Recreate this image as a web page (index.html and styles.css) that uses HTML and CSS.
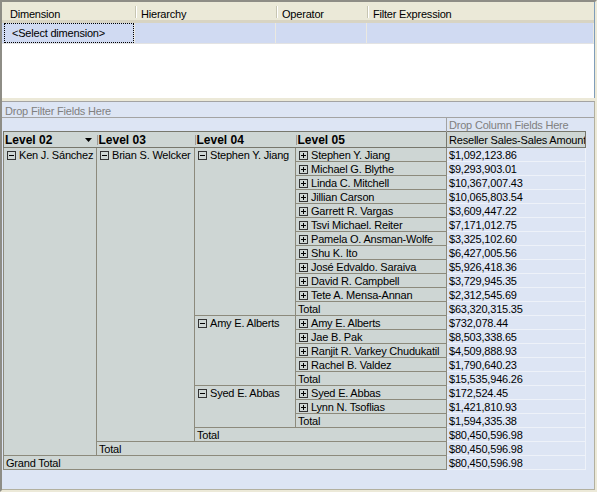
FILE: index.html
```html
<!DOCTYPE html>
<html lang="en">
<head>
    <meta charset="UTF-8">
    <title>Pivot Grid</title>
    <link rel="stylesheet" href="styles.css">
</head>
<body>
    <div class="frame">
        <div class="filters">
            <div class="grid-head">
                <div class="col c1">Dimension</div>
                <div class="col c2">Hierarchy</div>
                <div class="col c3">Operator</div>
                <div class="col c4">Filter Expression</div>
            </div>
            <div class="grid-row">
                <div class="cell c1"><span class="focus">&lt;Select dimension&gt;</span></div>
                <div class="cell c2"></div>
                <div class="cell c3"></div>
                <div class="cell c4"></div>
            </div>
        </div>
        <div class="splitter"></div>
        <div class="pivot">
            <div class="drop-filter">Drop Filter Fields Here</div>
            <table class="pv">
                <colgroup>
                    <col class="w1"><col class="w2"><col class="w3"><col class="w4"><col class="w5">
                </colgroup>
                <tr class="drop-row">
                    <td colspan="4" class="blank"></td>
                    <td class="drop-col">Drop Column Fields Here</td>
                </tr>
                <tr class="head">
                    <th class="lv">Level 02<svg class="arrow" width="7" height="4" viewBox="0 0 7 4"><path d="M0 0h7L3.5 4z"/></svg></th>
                    <th class="lv">Level 03</th>
                    <th class="lv">Level 04</th>
                    <th class="lv">Level 05</th>
                    <th class="measure">Reseller Sales-Sales Amount</th>
                </tr>
                <tr>
                    <td rowspan="22" class="rh"><i class="ex"></i>Ken J. Sánchez</td>
                    <td rowspan="21" class="rh"><i class="ex"></i>Brian S. Welcker</td>
                    <td rowspan="12" class="rh"><i class="ex"></i>Stephen Y. Jiang</td>
                    <td class="rh"><i class="ex plus"></i>Stephen Y. Jiang</td>
                    <td class="val">$1,092,123.86</td>
                </tr>
                <tr><td class="rh"><i class="ex plus"></i>Michael G. Blythe</td><td class="val">$9,293,903.01</td></tr>
                <tr><td class="rh"><i class="ex plus"></i>Linda C. Mitchell</td><td class="val">$10,367,007.43</td></tr>
                <tr><td class="rh"><i class="ex plus"></i>Jillian Carson</td><td class="val">$10,065,803.54</td></tr>
                <tr><td class="rh"><i class="ex plus"></i>Garrett R. Vargas</td><td class="val">$3,609,447.22</td></tr>
                <tr><td class="rh"><i class="ex plus"></i>Tsvi Michael. Reiter</td><td class="val">$7,171,012.75</td></tr>
                <tr><td class="rh"><i class="ex plus"></i>Pamela O. Ansman-Wolfe</td><td class="val">$3,325,102.60</td></tr>
                <tr><td class="rh"><i class="ex plus"></i>Shu K. Ito</td><td class="val">$6,427,005.56</td></tr>
                <tr><td class="rh"><i class="ex plus"></i>José Edvaldo. Saraiva</td><td class="val">$5,926,418.36</td></tr>
                <tr><td class="rh"><i class="ex plus"></i>David R. Campbell</td><td class="val">$3,729,945.35</td></tr>
                <tr><td class="rh"><i class="ex plus"></i>Tete A. Mensa-Annan</td><td class="val">$2,312,545.69</td></tr>
                <tr><td class="rh">Total</td><td class="val">$63,320,315.35</td></tr>
                <tr>
                    <td rowspan="5" class="rh"><i class="ex"></i>Amy E. Alberts</td>
                    <td class="rh"><i class="ex plus"></i>Amy E. Alberts</td>
                    <td class="val">$732,078.44</td>
                </tr>
                <tr><td class="rh"><i class="ex plus"></i>Jae B. Pak</td><td class="val">$8,503,338.65</td></tr>
                <tr><td class="rh"><i class="ex plus"></i>Ranjit R. Varkey Chudukatil</td><td class="val">$4,509,888.93</td></tr>
                <tr><td class="rh"><i class="ex plus"></i>Rachel B. Valdez</td><td class="val">$1,790,640.23</td></tr>
                <tr><td class="rh">Total</td><td class="val">$15,535,946.26</td></tr>
                <tr>
                    <td rowspan="3" class="rh"><i class="ex"></i>Syed E. Abbas</td>
                    <td class="rh"><i class="ex plus"></i>Syed E. Abbas</td>
                    <td class="val">$172,524.45</td>
                </tr>
                <tr><td class="rh"><i class="ex plus"></i>Lynn N. Tsoflias</td><td class="val">$1,421,810.93</td></tr>
                <tr><td class="rh">Total</td><td class="val">$1,594,335.38</td></tr>
                <tr><td colspan="2" class="rh">Total</td><td class="val">$80,450,596.98</td></tr>
                <tr><td colspan="3" class="rh">Total</td><td class="val">$80,450,596.98</td></tr>
                <tr><td colspan="4" class="rh">Grand Total</td><td class="val">$80,450,596.98</td></tr>
            </table>
        </div>
    </div>
</body>
</html>
```

FILE: styles.css
```css
*{
    margin: 0;
    padding: 0;
    box-sizing: border-box;
}
body{
    font-family: "Liberation Sans", Arial, sans-serif;
    font-size: 11px;
    letter-spacing: -0.2px;
    color: #000;
    background-color: #ece9d8;
}
.frame{
    width: 597px;
    height: 492px;
    border-top: 2px solid #8e8d86;
    border-left: 2px solid #8e8d86;
    border-right: 2px solid #ece9d8;
    border-bottom: 2px solid #ece9d8;
}

/* filter grid */
.filters{
    height: 96px;
    background-color: #fff;
    border-right: 1px solid #7f9db9;
}
.grid-head{
    display: flex;
    height: 21px;
    background-color: #ebe9d8;
    border-bottom: 3px solid #d8d4c3;
}
.grid-head .col{
    line-height: 18px;
    padding: 3px 0 0 6px;
}
.grid-head .c1{
    padding-left: 8px;
}
.grid-head .col + .col{
    background: linear-gradient(#c7c5b2, #c7c5b2) no-repeat 0 4px / 1px 12px,
                linear-gradient(#fff, #fff) no-repeat 1px 4px / 1px 12px;
}
.c1{ width: 133px; }
.c2{ width: 141px; }
.c3{ width: 91px; }
.c4{ flex: 1; }
.grid-row{
    display: flex;
    height: 21px;
    background-color: #d0daf2;
    border-bottom: 1px solid #e3e3e3;
}
.grid-row .cell{
    border-right: 1px solid #ebe9e0;
}
.grid-row .c1{
    padding-left: 2px;
}
.focus{
    display: block;
    height: 20px;
    border: 1px dotted #000;
    padding-left: 7px;
    line-height: 18px;
}
.splitter{
    height: 3px;
}

/* pivot */
.pivot{
    height: 389px;
    background-color: #dde5f4;
    border-top: 1px solid #a3a3a3;
    border-right: 1px solid #b2b09f;
    border-bottom: 1px solid #b2b09f;
}
.drop-filter{
    height: 16px;
    line-height: 15px;
    padding: 2px 0 0 3px;
    color: #808080;
    border-bottom: 1px solid #a3a3a3;
}
.pv{
    margin-left: 1px;
    width: 583px;
    table-layout: fixed;
    border-collapse: collapse;
}
.w1{ width: 93px; }
.w2{ width: 98px; }
.w3{ width: 101px; }
.w4{ width: 151px; }
.w5{ width: 139px; }
.pv td, .pv th{
    height: 12px;
    line-height: 12px;
    padding: 1px 0 0 2px;
    text-align: left;
    white-space: nowrap;
    overflow: hidden;
    vertical-align: top;
}
.drop-col{
    color: #808080;
    border-left: 1px solid #a3a3a3;
}
.head th{
    height: 14px;
    line-height: 14px;
    background-color: #ced6d4;
    border-top: 1px solid #77776c;
    border-bottom: 1px solid #77776c;
}
.head .lv{
    font-size: 12px;
    letter-spacing: 0;
    padding-left: 1px;
}
.head .lv:first-child{
    border-left: 1px solid #77776c;
}
.head .lv + .lv{
    background: linear-gradient(#9c9c9c, #9c9c9c) no-repeat 0 3px / 1px 10px, #ced6d4;
    padding-left: 2px;
}
.arrow{
    float: right;
    margin: 5px 5px 0 0;
}
.head .measure{
    font-weight: normal;
    border: 1px solid #77776c;
}
.rh{
    background-color: #ced6d4;
    border: 1px solid #8c8a7c;
}
.val{
    border: 1px solid #eef2f9;
}
.ex{
    display: inline-block;
    width: 9px;
    height: 9px;
    margin: 0 3px 0 1px;
    vertical-align: -1px;
    border: 1px solid #333;
    background: linear-gradient(#000, #000) no-repeat center / 5px 1px;
}
.ex.plus{
    background: linear-gradient(#000, #000) no-repeat center / 5px 1px,
                linear-gradient(#000, #000) no-repeat center / 1px 5px;
}
```
